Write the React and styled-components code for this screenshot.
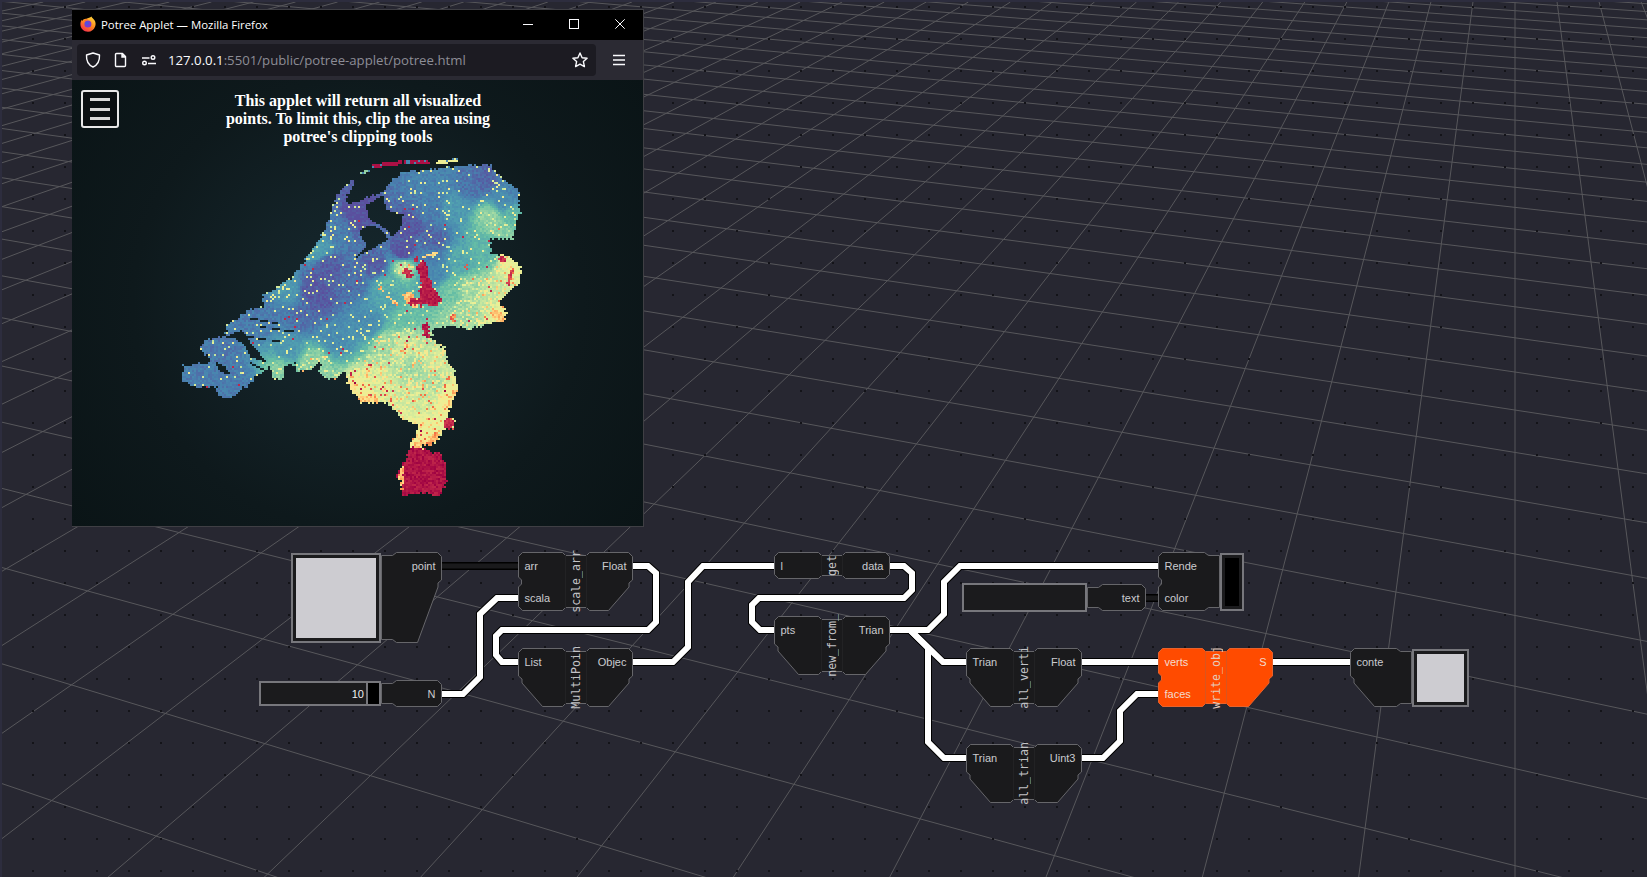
import React, { useEffect, useRef } from "react";
import styled, { createGlobalStyle } from "styled-components";

const GlobalStyle = createGlobalStyle`
  html, body { margin: 0; padding: 0; height: 100%; background: #2d2d3e; overflow: hidden; }
  #root { height: 100%; }
`;

const Page = styled.div`
  position: relative;
  width: 1647px;
  height: 877px;
  overflow: hidden;
  background: #2d2d3e;
`;

const GridSvg = styled.svg`
  position: absolute;
  left: 2px;
  top: 2px;
  width: 1645px;
  height: 875px;
  background: #272731;
`;

const WireSvg = styled.svg`
  position: absolute;
  left: 0;
  top: 0;
  width: 1647px;
  height: 877px;
`;

// things on the free canvas
const Placed = styled.div`
  position: absolute;
  left: ${(p) => p.$x}px;
  top: ${(p) => p.$y}px;
  display: flex;
  align-items: flex-start;
`;

const NodeBox = styled.div`
  position: relative;
  display: flex;
  flex: none;
  width: ${(p) => p.$w}px;
  height: ${(p) => p.$h}px;
  font: 11px "Liberation Sans", Arial, sans-serif;
  color: ${(p) => (p.$hot ? "#f3dccf" : "#cbcbcf")};
`;

const Outline = styled.svg`
  position: absolute;
  left: 0;
  top: 0;
  overflow: visible;
`;

const Col = styled.div`
  position: relative;
  flex: 1;
  display: flex;
  flex-direction: column;
  gap: 5px;
  align-items: ${(p) => (p.$right ? "flex-end" : "flex-start")};
  padding: 0 6.5px;
`;

const Port = styled.div`
  height: 27px;
  line-height: 28px;
  white-space: nowrap;
`;

const Strip = styled.div`
  position: relative;
  flex: none;
  width: 21px;
  display: flex;
  align-items: center;
  justify-content: center;
`;

const StripLabel = styled.span`
  writing-mode: vertical-rl;
  transform: rotate(180deg);
  white-space: nowrap;
  font: 11.6px "DejaVu Sans Mono", monospace;
  color: ${(p) => (p.$hot ? "#e4cabb" : "#c2c2c6")};
`;

const WidgetBox = styled.div`
  flex: none;
  box-sizing: border-box;
  width: ${(p) => p.$w}px;
  height: ${(p) => p.$h}px;
  margin-top: ${(p) => p.$top || 0}px;
  border: 2px solid #77777c;
  background: #1b1b1d;
  padding: ${(p) => p.$pad || 0}px;
  display: flex;
`;

const Swatch = styled.div`
  flex: 1;
  background: ${(p) => p.$color};
`;

const SliderValue = styled.div`
  flex: 1;
  text-align: right;
  padding-right: 2px;
  font: 11px/22px "Liberation Sans", Arial, sans-serif;
  color: #f0f0f2;
`;

const SliderKnob = styled.div`
  width: 11px;
  background: #000;
  border-left: 2px solid #77777c;
`;

const Window = styled.div`
  position: absolute;
  left: 72px;
  top: 9px;
  box-sizing: border-box;
  width: 572px;
  height: 518px;
  display: flex;
  flex-direction: column;
  border: 1px solid #3f3f44;
  border-left-width: 0;
  background: #000;
`;

const TitleBar = styled.div`
  flex: none;
  height: 30px;
  box-sizing: border-box;
  display: flex;
  align-items: center;
  padding: 0 0 2px 8px;
  gap: 5px;
  color: #fff;
  font: 11.4px "Open Sans", sans-serif;
`;

const TitleText = styled.span`
  flex: 1;
  white-space: nowrap;
`;

const WinControls = styled.div`
  display: flex;
  gap: 36px;
  padding-right: 18px;
`;

const Toolbar = styled.div`
  flex: none;
  height: 40px;
  box-sizing: border-box;
  background: #2b2a33;
  padding: 4px 18px 4px 5px;
  display: flex;
  align-items: center;
  gap: 17px;
`;

const UrlBar = styled.div`
  flex: 1;
  height: 32px;
  box-sizing: border-box;
  border-radius: 4px;
  background: #1c1b22;
  padding: 0 8px;
  display: flex;
  align-items: center;
  gap: 12px;
`;

const UrlText = styled.div`
  flex: 1;
  margin-left: -1px;
  white-space: nowrap;
  font: 13.2px "Open Sans", sans-serif;
  color: #8d8d96;
`;

const Host = styled.span`
  color: #fbfbfe;
`;

const Viewport = styled.div`
  position: relative;
  flex: 1;
  overflow: hidden;
  background: radial-gradient(circle at 50% 50%, #16292e 0%, #132227 30%, #0e191c 62%, #0a1416 100%);
`;

const MapCanvas = styled.canvas`
  position: absolute;
  left: 98px;
  top: 70px;
`;

const MenuButton = styled.div`
  position: absolute;
  left: 9px;
  top: 10px;
  box-sizing: border-box;
  width: 38px;
  height: 38px;
  border: 2px solid #e8e8e8;
  border-radius: 3px;
  background: #0a0f11;
  display: flex;
  flex-direction: column;
  justify-content: center;
  align-items: center;
  gap: 6.5px;
`;

const MenuLine = styled.i`
  display: block;
  width: 20px;
  height: 3px;
  background: #d8d8d8;
`;

const Notice = styled.div`
  position: absolute;
  left: 146px;
  top: 12px;
  width: 280px;
  text-align: center;
  font: bold 16px/18px "Liberation Serif", "Times New Roman", serif;
  color: #fff;
`;

// ---------- node outline ----------
function outline({ w, h, total, left, right, strip, stubL, stubR }) {
  const p = [];
  const add = (x, y) => p.push([x, y]);
  const s0 = 47;
  const s1 = 68;

  if (stubL) { add(0, 3); add(11, 3); add(15, 0); } else { add(0, 4); add(4, 0); }
  if (strip) { add(s0 - 3, 0); add(s0, 3); add(s1, 3); add(s1 + 3, 0); }

  if (stubR) {
    add(w - 15, 0); add(w - 11, 3); add(w, 3); add(w, h - 3); add(w - 11, h - 3); add(w - 15, h);
  } else {
    add(w - 4, 0); add(w, 4);
    for (let i = 1; i < right; i++) {
      const y = 29.5 + 32 * (i - 1);
      add(w, y - 5); add(w - 3, y - 2); add(w - 3, y + 2); add(w, y + 5);
    }
    if (right < total) {
      const y = 29.5 + 32 * (right - 1);
      add(w, y - 2); add(w - 3.5, y + 1); add(w - 3.5, y + 5); add(w - 24, h);
    } else {
      add(w, h - 4); add(w - 4, h);
    }
  }

  if (strip) { add(s1 + 3, h); add(s1, h - 3); add(s0, h - 3); add(s0 - 3, h); }

  if (stubL) {
    add(15, h); add(11, h - 3); add(0, h - 3);
  } else if (left < total) {
    const y = 29.5 + 32 * (left - 1);
    add(24, h); add(3.5, y + 5); add(3.5, y + 1); add(0, y - 2);
  } else {
    add(4, h); add(0, h - 4);
    for (let i = left - 1; i >= 1; i--) {
      const y = 29.5 + 32 * (i - 1);
      add(0, y + 5); add(3, y + 2); add(3, y - 2); add(0, y - 5);
    }
  }
  return p.map(([x, y]) => `${x + 0.5},${y + 0.5}`).join(" ");
}

function Node({ w = 115, h, total = 1, left = [], right = [], label, hot, stubL, stubR }) {
  const height = h || (total === 1 ? 27 : 59);
  const pts = outline({ w: w - 1, h: height - 1, total, left: left.length, right: right.length, strip: !!label, stubL, stubR });
  const edge = hot ? "#e8622c" : "#66666a";
  return (
    <NodeBox $w={w} $h={height} $hot={hot}>
      <Outline width={w} height={height}>
        <polygon points={pts} fill={hot ? "#ff4b00" : "#1a1a1c"} stroke={edge} strokeWidth="1" />
        {label && <path d={`M47.5 3V${height - 3}M68.5 3V${height - 3}`} stroke={hot ? "#d9551f" : "#222224"} />}
      </Outline>
      {(left.length > 0 || !right.length) && <Col>{left.map((t) => <Port key={t}>{t}</Port>)}</Col>}
      {label && <Strip><StripLabel $hot={hot}>{label}</StripLabel></Strip>}
      {right.length > 0 && <Col $right>{right.map((t) => <Port key={t}>{t}</Port>)}</Col>}
    </NodeBox>
  );
}

// ---------- grid ----------
const HOR = -320;
const VP_X = 1515;
const SIDE_X = -3240;

function gridLines() {
  const out = [];
  // lines running to the far vanishing point above the page
  for (let k = -110; k <= 4; k++) {
    const xTop = VP_X + 42.05 * k;
    const dx = (xTop - VP_X) / 322;
    const yEnd = 900;
    out.push(`M${xTop - 2} 0L${VP_X + dx * (yEnd - HOR) - 2} ${yEnd - 2}`);
  }
  // lines running to the vanishing point far on the left
  for (let k = -16; k <= 30; k++) {
    const d = 1 / (0.001445 + 0.0000752 * k);
    const slope = d / (VP_X - SIDE_X);
    const yAt = (x) => HOR + slope * (x - SIDE_X);
    out.push(`M-2 ${yAt(0) - 2}L1647 ${yAt(1649) - 2}`);
  }
  return out.join("");
}

// ---------- point cloud ----------
const MAIN = [[495,145],[520,115],[545,88],[555,95],[530,140],[535,160],[580,150],[640,122],[650,125],[655,95],[700,65],[780,60],[850,50],[960,42],[975,65],[1010,95],[1045,120],[1050,190],[1035,230],[1030,270],[960,265],[965,310],[1020,320],[1050,345],[1055,400],[1020,420],[990,460],[1012,490],[1000,515],[960,520],[900,540],[840,525],[790,535],[790,560],[770,560],[825,595],[830,630],[855,660],[862,720],[830,800],[855,810],[850,835],[825,835],[790,885],[775,890],[765,880],[750,890],[785,905],[810,910],[830,945],[830,990],[810,1040],[770,1030],[695,1035],[695,1000],[680,975],[700,940],[715,900],[735,860],[745,825],[690,800],[655,760],[620,760],[570,755],[540,715],[525,665],[500,685],[470,685],[440,670],[460,640],[440,640],[420,660],[380,665],[375,640],[345,650],[345,685],[315,685],[300,650],[260,680],[235,705],[195,735],[170,745],[145,740],[140,710],[80,712],[35,695],[40,645],[110,640],[125,632],[85,590],[110,565],[160,560],[172,540],[170,520],[200,510],[235,478],[280,470],[275,435],[300,425],[360,385],[400,340],[440,280],[470,225],[490,160]];
const HOLES = [
  [[590,165],[640,135],[648,180],[700,195],[692,235],[668,262],[650,240],[625,222],[600,210],[592,190]],
  [[570,240],[600,225],[630,235],[655,268],[610,295],[560,322],[590,285],[575,265]],
  [[165,560],[215,540],[250,590],[295,640],[240,620],[225,585],[195,565]],
  [[135,635],[165,650],[185,675],[150,665]],
];
const CHANNELS = [[240,505,320,520,2],[270,530,370,545,2],[230,560,330,575,2],[240,640,300,668,3],[345,650,345,685,3]];
const ISLANDS = [[612,48,690,38,6,0.98],[705,35,775,38,5,0.98],[805,38,860,30,5,0.6],[570,70,600,62,3,0.4]];
const DUNES = [300, 430, 495, 170];
const HOTS = [
  [755,350,775,420,15,0.99],[770,425,790,445,22,0.99],[725,455,800,452,10,0.98],[715,440,735,460,14,0.82],[710,365,718,375,10,0.97],
  [765,525,772,555,8,0.99],[992,325,1000,330,7,0.97],[1025,365,1015,400,7,0.95],[975,490,1000,510,12,0.82],
  [840,820,835,825,14,0.97],[888,345,890,360,4,0.95],[850,495,848,510,6,0.9],[855,725,830,770,6,0.8],
  [780,880,800,855,8,0.85],[625,410,680,465,3,0.82],[760,320,800,310,4,0.78],[735,335,740,325,4,0.97],
  [695,950,690,1030,7,0.82],[740,885,770,885,10,0.8],
  [700,915,825,915,25,1],[690,965,830,965,42,1],[700,1015,830,1015,35,1],[575,745,620,750,8,0.78],[545,705,560,735,8,0.74],
];
const FIELD = [[500,230,.1],[470,350,.03],[420,420,.02],[450,450,.03],[560,190,0],[720,230,.02],[700,310,0],[620,350,.03],[550,400,.07],[790,270,.05],[780,180,.1],[800,130,.12],[900,110,.08],[950,90,.05],[1030,120,.12],[850,170,.2],[1000,150,.15],[1030,200,.3],[960,200,.4],[1000,240,.38],[950,300,.3],[870,330,.25],[800,370,.14],[780,320,.1],[700,350,.46],[650,400,.28],[840,420,.35],[900,420,.43],[960,440,.48],[1030,340,.56],[1000,480,.56],[880,490,.42],[650,450,.24],[600,520,.15],[500,560,.15],[400,500,.07],[350,600,.2],[300,500,.1],[250,520,.1],[150,600,.09],[100,660,.1],[200,700,.1],[700,500,.33],[650,580,.42],[700,590,.5],[730,650,.42],[790,700,.44],[800,640,.5],[620,700,.52],[570,730,.6],[760,740,.5],[840,740,.6],[790,850,.56],[760,870,.62],[430,640,.4],[330,660,.38],[360,420,.2],[440,300,.22]];
const STOPS = [[0,[90,79,158]],[.11,[72,130,175]],[.22,[80,158,176]],[.33,[102,190,165]],[.44,[171,221,164]],[.55,[230,240,152]],[.63,[243,236,145]],[.7,[254,224,139]],[.78,[253,174,97]],[.85,[244,109,67]],[.92,[213,62,79]],[1,[158,1,66]]];

function colorAt(e) {
  const v = Math.min(1, Math.max(0, e));
  for (let i = 1; i < STOPS.length; i++) {
    if (v <= STOPS[i][0]) {
      const [a, ca] = STOPS[i - 1];
      const [b, cb] = STOPS[i];
      const t = (v - a) / (b - a);
      return `rgb(${ca.map((c, n) => Math.round(c + (cb[n] - c) * t)).join(",")})`;
    }
  }
  return "rgb(158,1,66)";
}

function inPoly(x, y, poly) {
  let inside = false;
  for (let i = 0, j = poly.length - 1; i < poly.length; j = i++) {
    const [xi, yi] = poly[i];
    const [xj, yj] = poly[j];
    if (yi > y !== yj > y && x < ((xj - xi) * (y - yi)) / (yj - yi) + xi) inside = !inside;
  }
  return inside;
}

function segDist(x, y, s) {
  const [ax, ay, bx, by] = s;
  const dx = bx - ax;
  const dy = by - ay;
  const l = dx * dx + dy * dy || 1;
  const t = Math.max(0, Math.min(1, ((x - ax) * dx + (y - ay) * dy) / l));
  return Math.hypot(x - ax - t * dx, y - ay - t * dy);
}

function drawCloud(ctx) {
  let seed = 20240611;
  const rnd = () => {
    seed = (seed + 0x6d2b79f5) | 0;
    let t = Math.imul(seed ^ (seed >>> 15), 1 | seed);
    t = (t + Math.imul(t ^ (t >>> 7), 61 | t)) ^ t;
    return ((t ^ (t >>> 14)) >>> 0) / 4294967296;
  };
  for (let zy = 0; zy < 1050; zy += 6) {
    for (let zx = 0; zx < 1110; zx += 6) {
      const x = zx + 3;
      const y = zy + 3;
      let e = null;
      // a little jitter so the coast comes out rough
      const jx = x + (rnd() - 0.5) * 8;
      const jy = y + (rnd() - 0.5) * 8;
      const island = ISLANDS.find((s) => segDist(x, y, s) < s[4]);
      if (island) {
        e = rnd() < 0.8 ? island[5] : 0.12;
      } else if (inPoly(jx, jy, MAIN) && !HOLES.some((h) => inPoly(x, y, h)) && !CHANNELS.some((c) => segDist(x, y, c) < c[4])) {
        let sum = 0;
        let wt = 0;
        for (const [fx, fy, fv] of FIELD) {
          const d = (fx - x) ** 2 + (fy - y) ** 2 + 40;
          const w = 1 / (d * d);
          sum += fv * w;
          wt += w;
        }
        e = sum / wt + (rnd() - 0.5) * 0.07;
        const hot = HOTS.find((s) => segDist(x, y, s) < s[4] + (rnd() - 0.5) * 6);
        if (hot) {
          e = hot[5] - rnd() * (hot[5] >= 0.97 ? 0.05 : 0.12);
        } else {
          const r = rnd();
          const speckle = segDist(x, y, DUNES) < 30 ? 0.18 : 0.05;
          if (e < 0.4 && r < speckle) e = 0.48 + rnd() * 0.16;
          else if (e >= 0.4 && r < 0.28) e = e + 0.05 + rnd() * rnd() * 0.45;
          else if (r > 0.997) e = 0.95;
        }
      }
      if (e !== null) {
        ctx.fillStyle = colorAt(e);
        ctx.fillRect(zx / 3, zy / 3, 2, 2);
      }
    }
  }
}

function PointCloud() {
  const ref = useRef(null);
  useEffect(() => {
    drawCloud(ref.current.getContext("2d"));
  }, []);
  return <MapCanvas ref={ref} width={370} height={350} />;
}

// ---------- wires ----------
const WHITE_WIRES = [
  "633,566 648,566 656,573 656,622 648,630 502,630 496,636 496,655 502,662 518,662",
  "442,694 463,694 480,677 480,614 497,598 518,598",
  "633,662 673,662 688,647 688,582 703,566 774,566",
  "890,566 904,566 912,573 912,590 904,598 759,598 752,605 752,622 760,630 774,630",
  "890,630 928,630 944,614 944,582 960,566 1158,566",
  "910,630 943,662 966,662",
  "910,630 928,648 928,742 944,758 966,758",
  "1082,662 1158,662",
  "1082,758 1103,758 1120,741 1120,711 1137,694 1158,694",
  "1273,662 1350,662",
];
const DARK_WIRES = ["442,566 518,566", "1146,598 1158,598"];

function Wires() {
  return (
    <WireSvg viewBox="0 0 1647 877">
      <g fill="none" strokeLinejoin="miter">
        {DARK_WIRES.map((d) => <polyline key={d} points={d} stroke="#000" strokeWidth="8" />)}
        {DARK_WIRES.map((d) => <polyline key={d} points={d} stroke="#1a1a1c" strokeWidth="5" />)}
        {WHITE_WIRES.map((d) => <polyline key={d} points={d} stroke="#000" strokeWidth="8" />)}
        {WHITE_WIRES.map((d) => <polyline key={d} points={d} stroke="#fff" strokeWidth="6" />)}
      </g>
    </WireSvg>
  );
}

// ---------- browser icons ----------
const Icon = ({ children, w = 16, h = 16 }) => (
  <svg width={w} height={h} viewBox={`0 0 ${w} ${h}`} fill="none" stroke="#fbfbfe" strokeWidth="1.4" style={{ flex: "none" }}>
    {children}
  </svg>
);

const FirefoxLogo = () => (
  <svg width="16" height="16" viewBox="0 0 16 16" style={{ flex: "none" }}>
    <defs>
      <linearGradient id="ffA" x1="0.8" y1="0.05" x2="0.2" y2="1">
        <stop offset="0" stopColor="#ffd23a" />
        <stop offset="0.45" stopColor="#ff8a1f" />
        <stop offset="1" stopColor="#f3264f" />
      </linearGradient>
    </defs>
    <path d="M11.5.6c.3 1.5 2 2.2 3 3.7 1.3 2 1.4 4.3.6 6.2C14 13.700 11.300 15.800 8 15.800 3.700 15.800.4 12.500.4 8.300c0-1.700.5-3.200 1.300-4.500l.5 1.300C3.100 3.400 4.800 2.600 6.300 2.800 7.900 1.900 10.300 1.900 11.500.6Z" fill="url(#ffA)" />
    <circle cx="7.900" cy="8.100" r="3.500" fill="#7b3bd0" />
    <circle cx="7" cy="7.200" r="1.700" fill="#4a55e0" />
    <path d="M3.700 5.200c1-1.300 2.500-2 4.300-1.800-1 .5-1.700 1-2 1.700-1 0-1.700.1-2.300.1Z" fill="#ff6a2a" />
  </svg>
);

export default function App() {
  return (
    <Page>
      <GlobalStyle />
      <GridSvg viewBox="0 0 1645 875">
        <defs>
          <pattern id="dots" x="-3" y="3" width="32" height="32" patternUnits="userSpaceOnUse">
            <rect x="1" y="1" width="2" height="2" fill="#131318" />
          </pattern>
        </defs>
        <path d={gridLines()} stroke="#57575b" strokeWidth="1" fill="none" />
        <rect width="1645" height="875" fill="url(#dots)" />
      </GridSvg>

      <Wires />

      <Placed $x={291} $y={552}>
        <WidgetBox $w={90} $h={90} $top={1} $pad={3}><Swatch $color="#cdccd1" /></WidgetBox>
        <Node w={61} h={91} total={3} right={["point"]} stubL />
      </Placed>
      <Placed $x={259} $y={680}>
        <WidgetBox $w={122} $h={25} $top={1}>
          <SliderValue>10</SliderValue>
          <SliderKnob />
        </WidgetBox>
        <Node w={61} right={["N"]} stubL />
      </Placed>
      <Placed $x={518} $y={552}>
        <Node total={2} left={["arr", "scala"]} right={["Float"]} label="scale_arr" />
      </Placed>
      <Placed $x={518} $y={648}>
        <Node total={2} left={["List"]} right={["Objec"]} label="MultiPoin" />
      </Placed>
      <Placed $x={774} $y={552}>
        <Node w={116} left={["l"]} right={["data"]} label="get" />
      </Placed>
      <Placed $x={774} $y={616}>
        <Node w={116} total={2} left={["pts"]} right={["Trian"]} label="new_from_" />
      </Placed>
      <Placed $x={966} $y={648}>
        <Node w={116} total={2} left={["Trian"]} right={["Float"]} label="all_verti" />
      </Placed>
      <Placed $x={966} $y={744}>
        <Node w={116} total={2} left={["Trian"]} right={["Uint3"]} label="all_trian" />
      </Placed>
      <Placed $x={962} $y={584}>
        <WidgetBox $w={125} $h={29} $top={-1} />
        <Node w={59} right={["text"]} stubL />
      </Placed>
      <Placed $x={1158} $y={552}>
        <Node w={62} total={2} left={["Rende", "color"]} stubR />
        <WidgetBox $w={24} $h={58} $top={1} $pad={3}><Swatch $color="#000" /></WidgetBox>
      </Placed>
      <Placed $x={1158} $y={648}>
        <Node total={2} left={["verts", "faces"]} right={["S"]} label="write_obj" hot />
      </Placed>
      <Placed $x={1350} $y={648}>
        <Node w={62} total={2} left={["conte"]} stubR />
        <WidgetBox $w={57} $h={58} $top={1} $pad={3}><Swatch $color="#cdccd1" /></WidgetBox>
      </Placed>

      <Window>
        <TitleBar>
          <FirefoxLogo />
          <TitleText>Potree Applet — Mozilla Firefox</TitleText>
          <WinControls>
            <Icon w={10} h={10}><path d="M0 5.500H10" strokeWidth="1" /></Icon>
            <Icon w={10} h={10}><rect x=".5" y=".5" width="9" height="9" strokeWidth="1" /></Icon>
            <Icon w={10} h={10}><path d="M.3.300 9.700 9.700M9.700.300.3 9.700" strokeWidth="1" /></Icon>
          </WinControls>
        </TitleBar>
        <Toolbar>
          <UrlBar>
            <Icon>
              <path d="M8 1 14.500 3c.3 5.500-1.500 9.800-6.500 12C3 12.800 1.200 8.500 1.500 3Z" strokeLinejoin="round" />
            </Icon>
            <Icon>
              <path d="M3.500 1.500h6l3 3v9a1 1 0 0 1-1 1h-8a1 1 0 0 1-1-1v-11a1 1 0 0 1 1-1Z" strokeLinejoin="round" />
              <path d="M9 1.500v3.500h3.500" fill="#fbfbfe" />
            </Icon>
            <Icon>
              <path d="M1 6h7.500M7 11.500h8" />
              <circle cx="12" cy="5.500" r="1.800" />
              <circle cx="3.500" cy="11" r="1.800" />
            </Icon>
            <UrlText><Host>127.0.0.1</Host>:5501/public/potree-applet/potree.html</UrlText>
            <Icon>
              <path d="m8 1 2.100 4.700 5 .5-3.700 3.400 1 5L8 12.100l-4.400 2.500 1-5L.9 6.200l5-.5Z" strokeLinejoin="round" />
            </Icon>
          </UrlBar>
          <Icon w={12} h={12}><path d="M0 1.500h12M0 6h12M0 10.500h12" /></Icon>
        </Toolbar>
        <Viewport>
          <PointCloud />
          <MenuButton>
            <MenuLine />
            <MenuLine />
            <MenuLine />
          </MenuButton>
          <Notice>This applet will return all visualized points. To limit this, clip the area using potree's clipping tools</Notice>
        </Viewport>
      </Window>
    </Page>
  );
}
